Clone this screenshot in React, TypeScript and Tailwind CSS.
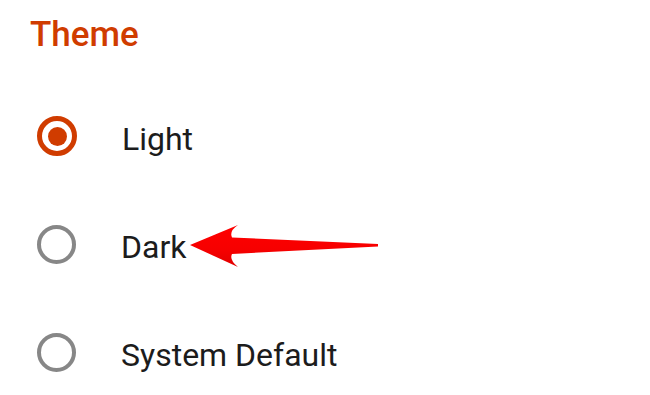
const options = [
  { label: "Light", selected: true },
  { label: "Dark", selected: false },
  { label: "System Default", selected: false },
];

function Radio({ selected }: { selected: boolean }) {
  if (selected) {
    return (
      <div className="flex h-[40px] w-[40px] shrink-0 items-center justify-center rounded-full border-[5px] border-[#d03c00]">
        <div className="h-[19px] w-[19px] rounded-full bg-[#d03c00]" />
      </div>
    );
  }
  return <div className="h-[39px] w-[39px] shrink-0 rounded-full border-[4px] border-[#878787]" />;
}

export default function App() {
  return (
    <div className="relative h-[395px] w-[650px] overflow-hidden bg-white font-['Roboto',sans-serif]">
      <h1 className="pl-[30px] pt-[17px] text-[35px] font-medium leading-none text-[#d03c00]">Theme</h1>

      <div className="mt-[30px] flex flex-col">
        {options.map((opt) => (
          <div key={opt.label} className="flex h-[108px] items-center pl-[37px]">
            <Radio selected={opt.selected} />
            <span className="ml-[45px] mt-[6px] text-[32px] leading-none text-[#1c1c1c]">{opt.label}</span>
          </div>
        ))}
      </div>

      {/* annotation arrow pointing at "Dark" */}
      <svg className="absolute left-0 top-0" width="650" height="395" viewBox="0 0 650 395">
        <defs>
          <linearGradient id="arrowShade" x1="0" y1="0" x2="0" y2="1">
            <stop offset="0" stopColor="#ff0000" />
            <stop offset="0.6" stopColor="#f60000" />
            <stop offset="1" stopColor="#e00000" />
          </linearGradient>
        </defs>
        <path
          d="M190 245 L238 225 Q229 231 232 237.5 L378 244 L378 246.5 L232 254 Q229 260 238 267 Z"
          fill="url(#arrowShade)"
        />
      </svg>
    </div>
  );
}
